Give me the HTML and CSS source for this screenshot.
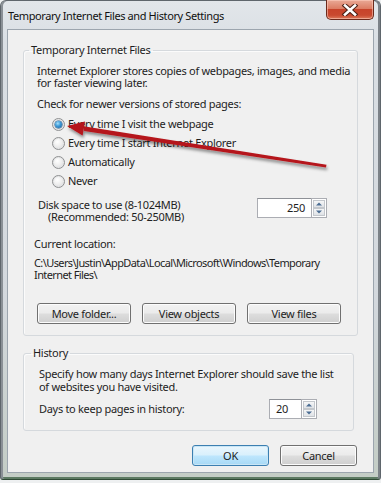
FILE: index.html
```html
<!DOCTYPE html>
<html>
<head>
<meta charset="utf-8">
<link rel="stylesheet" href="styles.css">
</head>
<body>
<div class="window">
  <div class="titlebar">
    <span class="title">Temporary Internet Files and History Settings</span>
    <button class="close" aria-label="Close">
      <svg width="18" height="12" viewBox="0 0 18 12">
        <path d="M4 1.5 L14 10.5 M14 1.5 L4 10.5" stroke="#4a2016" stroke-width="4.6" stroke-linecap="square"/>
        <path d="M4 1.5 L14 10.5 M14 1.5 L4 10.5" stroke="#ffffff" stroke-width="2.6" stroke-linecap="square"/>
      </svg>
    </button>
  </div>
  <div class="client">
    <fieldset class="group group-files">
      <legend>Temporary Internet Files</legend>
      <p class="text">Internet Explorer stores copies of webpages, images, and media for faster viewing later.</p>
      <p class="text check">Check for newer versions of stored pages:</p>
      <div class="radios">
        <label class="radio-row"><span class="radio checked"></span><span>Every time I visit the webpage</span></label>
        <label class="radio-row"><span class="radio"></span><span>Every time I start Internet Explorer</span></label>
        <label class="radio-row"><span class="radio"></span><span>Automatically</span></label>
        <label class="radio-row"><span class="radio"></span><span>Never</span></label>
      </div>
      <div class="disk-row">
        <p class="disk-text">Disk space to use (8-1024MB)<br><span class="indent">(Recommended: 50-250MB)</span></p>
        <div class="spinner spinner-disk">
          <span class="spin-value">250</span>
          <span class="spin-btns"><span class="spin-up"></span><span class="spin-down"></span></span>
        </div>
      </div>
      <p class="text location-label">Current location:</p>
      <p class="text path">C:\Users\Justin\AppData\Local\Microsoft\Windows\Temporary Internet Files\</p>
      <div class="btn-row">
        <button class="btn">Move folder...</button>
        <button class="btn">View objects</button>
        <button class="btn">View files</button>
      </div>
    </fieldset>
    <fieldset class="group group-history">
      <legend>History</legend>
      <p class="text">Specify how many days Internet Explorer should save the list of websites you have visited.</p>
      <div class="days-row">
        <span>Days to keep pages in history:</span>
        <div class="spinner spinner-days">
          <span class="spin-value left">20</span>
          <span class="spin-btns"><span class="spin-up"></span><span class="spin-down"></span></span>
        </div>
      </div>
    </fieldset>
    <div class="dialog-buttons">
      <button class="btn btn-default">OK</button>
      <button class="btn btn-cancel">Cancel</button>
    </div>
  </div>
  <svg class="arrow" width="381" height="483" viewBox="0 0 381 483">
    <defs>
      <filter id="sh" x="-10%" y="-50%" width="120%" height="200%">
        <feDropShadow dx="1" dy="2.5" stdDeviation="1.4" flood-color="#000" flood-opacity="0.45"/>
      </filter>
    </defs>
    <g filter="url(#sh)">
      <polygon points="326.5,164.8 326,167.6 84.2,131 83.4,126.2" fill="#b5141a"/>
      <polygon points="67,126 85,121.6 82.6,135.6" fill="#b5141a"/>
    </g>
  </svg>
</div>
</body>
</html>
```
FILE: styles.css
```css
* { box-sizing: border-box; }
html, body { margin: 0; padding: 0; }
body {
  width: 381px;
  height: 483px;
  background: #eef0f1;
  font-family: "Noto Sans", "DejaVu Sans", sans-serif;
  font-size: 11px;
  line-height: 12.3px;
  letter-spacing: -0.3px;
  color: #1e1e1e;
  overflow: hidden;
}
.window {
  position: relative;
  width: 381px;
  height: 480px;
  border: 1px solid #5f666c;
  border-bottom-color: #2f4a35;
  border-radius: 6px 6px 3px 3px;
  background: linear-gradient(#e2e6ea 0px, #dadfe4 40px, #d3d8dd 300px, #c4cdc6 470px);
  box-shadow: inset 2px 0 0 #8a9096, inset -2px 0 0 #7c8288, inset 0 -2px 0 #5c7a62;
  padding: 0 6px 6px 6px;
  display: flex;
  flex-direction: column;
}
.titlebar {
  height: 28px;
  display: flex;
  justify-content: space-between;
  align-items: flex-start;
}
.title {
  margin-top: 7px;
  padding-left: 1px;
  font-size: 11px;
  line-height: 15px;
  letter-spacing: -0.4px;
  color: #111;
}
.close {
  margin-top: -1px;
  width: 48px;
  height: 20px;
  border: 1px solid #6b2a1c;
  border-top: none;
  border-radius: 0 0 5px 5px;
  background: linear-gradient(#e9a996 0%, #dc7d64 45%, #c7432a 50%, #c9492f 80%, #dc7a5c 100%);
  box-shadow: inset 0 0 0 1px rgba(255, 210, 195, 0.55);
  padding: 0;
  display: flex;
  align-items: center;
  justify-content: center;
}
.client {
  flex: 1;
  background: #f0f0f0;
  border: 1px solid #9ca5ae;
  padding: 14px 15px 0 15px;
  display: flex;
  flex-direction: column;
}
.group {
  margin: 0;
  border: 1px solid #d5d9dd;
  border-radius: 3px;
  box-shadow: inset 1px 1px 0 #fbfbfb;
  min-width: 0;
}
.group legend {
  padding: 0 2px;
  margin-left: -8px;
  line-height: 12px;
}
.group-files {
  padding: 9px 6px 11px 13px;
}
.text { margin: 0; }
.check { margin-top: 8px; }
.radios {
  margin-top: 5px;
  display: flex;
  flex-direction: column;
}
.radio-row {
  height: 19px;
  display: flex;
  align-items: center;
  padding-left: 15px;
  gap: 3px;
}
.radio {
  width: 13px;
  height: 13px;
  border-radius: 50%;
  border: 1px solid #8f9092;
  background: radial-gradient(circle at 40% 35%, #ffffff 0%, #eeeeee 45%, #d2d3d5 100%);
  box-shadow: inset 0 0 0 1px #e4e5e6;
  display: flex;
  align-items: center;
  justify-content: center;
}
.radio.checked::after {
  content: "";
  width: 7px;
  height: 7px;
  border-radius: 50%;
  background: radial-gradient(circle at 40% 35%, #a6e0fb 0%, #3b98d6 45%, #175a96 100%);
  box-shadow: 0 0 0 0.5px #1c4f7e;
}
.disk-row {
  margin-top: 7px;
  display: flex;
  justify-content: space-between;
  align-items: flex-start;
}
.disk-text { margin: 1px 0 0 0; padding-left: 1px; }
.indent { padding-left: 10px; }
.spinner {
  display: flex;
  height: 20px;
}
.spinner-disk { width: 70px; margin-right: 24px; }
.spinner-days { width: 48px; }
.spin-value {
  flex: 1;
  border: 1px solid #abadb3;
  border-top-color: #8e9197;
  border-right: none;
  background: #fff;
  text-align: right;
  padding: 3px 6px 0 0;
  font-size: 11px;
}
.spin-value.left { text-align: left; padding-left: 6px; }
.spin-btns {
  width: 16px;
  display: flex;
  flex-direction: column;
  border: 1px solid #abadb3;
  background: #fff;
  padding: 1px;
  gap: 0;
}
.spin-up, .spin-down {
  flex: 1;
  border: 1px solid #c3c7cc;
  background: linear-gradient(#f5f6f7, #dfe2e6);
  position: relative;
}
.spin-up::after, .spin-down::after {
  content: "";
  position: absolute;
  left: 50%;
  top: 50%;
  transform: translate(-50%, -50%);
  border-left: 3px solid transparent;
  border-right: 3px solid transparent;
}
.spin-up::after { border-bottom: 3px solid #4a6d93; }
.spin-down::after { border-top: 3px solid #4a6d93; }
.location-label { margin-top: 15px; margin-left: -3px; }
.path { margin-top: 6px; margin-left: -3px; letter-spacing: -0.6px; }
.btn-row {
  margin-top: 22px;
  display: flex;
  gap: 11px;
}
.btn {
  height: 21px;
  width: 94px;
  border: 1px solid #707070;
  border-radius: 3px;
  background: linear-gradient(#f2f2f2 0%, #ebebeb 48%, #dddddd 52%, #cfcfcf 100%);
  box-shadow: inset 0 0 0 1px #fcfcfc;
  font-family: inherit;
  font-size: 11px;
  letter-spacing: -0.3px;
  color: #1e1e1e;
  padding: 0;
}
.group-history {
  margin-top: 11px;
  margin-right: 4px;
  padding: 9px 15px 11px 15px;
}
.days-row {
  margin-top: 6px;
  display: flex;
  align-items: center;
  justify-content: space-between;
  padding-right: 21px;
}
.dialog-buttons {
  margin-top: 14px;
  display: flex;
  justify-content: flex-end;
  gap: 11px;
  padding-right: 1px;
}
.dialog-buttons .btn { width: 77px; height: 21px; }
.btn-default {
  border-color: #3c7fb1;
  background: linear-gradient(#eaf6fd 0%, #d9f0fc 48%, #bee6fd 52%, #a7d9f5 100%);
  box-shadow: inset 0 0 0 1px #c9e6f6;
}
.arrow {
  position: absolute;
  left: -1px;
  top: -1px;
  pointer-events: none;
}
```
